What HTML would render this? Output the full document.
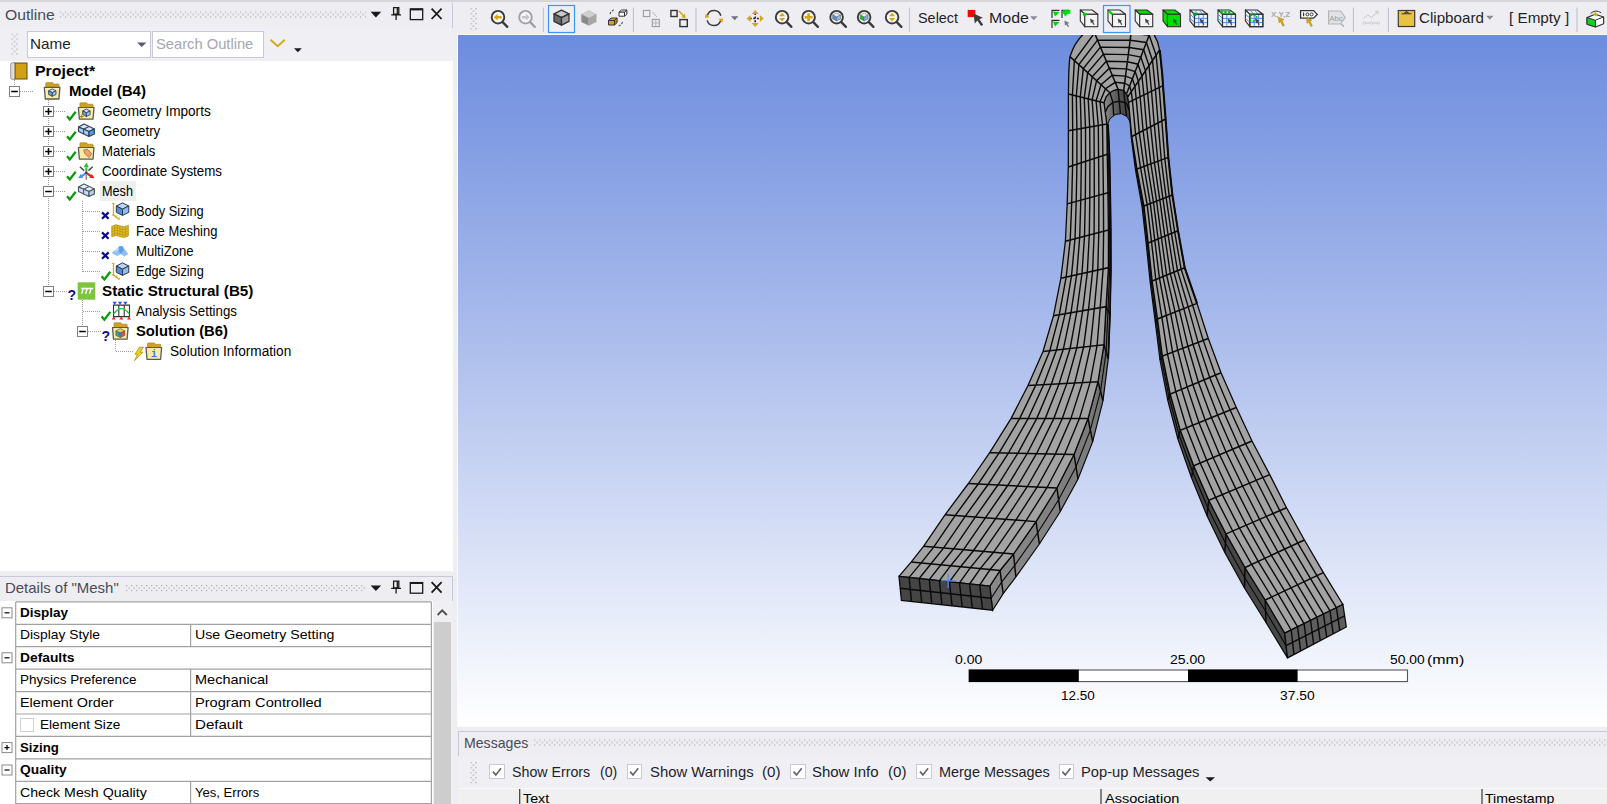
<!DOCTYPE html>
<html><head><meta charset="utf-8"><title>Mechanical</title><style>
html,body{margin:0;padding:0}
body{width:1607px;height:804px;overflow:hidden;background:#eeeef2;position:relative;font-family:"Liberation Sans",sans-serif;}
.b{position:absolute;box-sizing:border-box}
.t{position:absolute;white-space:nowrap;line-height:1;transform-origin:0 0;display:block}
svg.ov{position:absolute;left:0;top:0;width:1607px;height:804px;overflow:hidden}
</style></head>
<body>
<div class="b" style="left:0.0px;top:0.0px;width:1607.0px;height:2.0px;background:#d6d6da"></div>
<div class="b" style="left:452.0px;top:3.0px;width:1.0px;height:25.0px;background:#c8c8dc"></div>
<div class="b" style="left:0.0px;top:27.0px;width:452.0px;height:34.0px;background:#f0f0f4"></div>
<div class="b" style="left:27.0px;top:30.5px;width:124.0px;height:27.0px;background:#fff;border:1px solid #c8c8dc"></div>
<div class="b" style="left:152.0px;top:30.5px;width:112.0px;height:27.0px;background:#fff;border:1px solid #c8c8dc"></div>
<div class="b" style="left:0.0px;top:61.0px;width:452.5px;height:510.0px;background:#fff"></div>
<div class="b" style="left:100.2px;top:180.8px;width:36.2px;height:19.8px;background:#efefef"></div>
<div class="b" style="left:0.0px;top:576.0px;width:453.0px;height:1.0px;background:#c8c8dc"></div>
<div class="b" style="left:452.0px;top:576.0px;width:1.0px;height:25.0px;background:#c8c8dc"></div>
<div class="b" style="left:0.0px;top:601.0px;width:433.0px;height:203.0px;background:#fff"></div>
<div class="b" style="left:433.0px;top:601.0px;width:18.5px;height:203.0px;background:#f0f0f2"></div>
<div class="b" style="left:433.5px;top:622.0px;width:17.5px;height:182.0px;background:#cdcdcd"></div>
<div class="b" style="left:457.0px;top:34.0px;width:1150.0px;height:693.0px;background:#fbfbfb"></div>
<div class="b" style="left:458.0px;top:35.0px;width:1149.0px;height:691.0px;background:linear-gradient(to bottom,#6c8cde 0%,#a9bbec 42%,#ffffff 100%)"></div>
<div class="b" style="left:458.0px;top:731.0px;width:1149.0px;height:1.0px;background:#c8c8dc"></div>
<div class="b" style="left:458.0px;top:731.0px;width:1.0px;height:25.0px;background:#c8c8dc"></div>
<div class="b" style="left:458.0px;top:757.0px;width:1149.0px;height:30.0px;background:#f0f0f4"></div>
<div class="b" style="left:458.0px;top:788.0px;width:1149.0px;height:16.0px;background:#f0f0f0;border-top:1px solid #fafafa"></div>
<div class="b" style="left:489.3px;top:763.6px;width:15.6px;height:15.8px;background:#fff;border:1px solid #c8c8dc"></div>
<div class="b" style="left:626.5px;top:763.6px;width:15.6px;height:15.8px;background:#fff;border:1px solid #c8c8dc"></div>
<div class="b" style="left:790.0px;top:763.6px;width:15.6px;height:15.8px;background:#fff;border:1px solid #c8c8dc"></div>
<div class="b" style="left:916.4px;top:763.6px;width:15.6px;height:15.8px;background:#fff;border:1px solid #c8c8dc"></div>
<div class="b" style="left:1058.8px;top:763.6px;width:15.6px;height:15.8px;background:#fff;border:1px solid #c8c8dc"></div>
<div class="b" style="left:20.3px;top:717.8px;width:14.0px;height:14.2px;background:#fff;border:1px solid #d0d0d0"></div>
<svg class="ov" viewBox="0 0 1607 804"><defs><clipPath id="vp"><rect x="458" y="35" width="1149" height="691"/></clipPath></defs><g clip-path="url(#vp)"><defs><linearGradient id="lg" gradientUnits="userSpaceOnUse" x1="0" y1="280" x2="0" y2="580"><stop offset="0" stop-color="#606060"/><stop offset="0.5" stop-color="#7a7a7a"/><stop offset="1" stop-color="#888888"/></linearGradient></defs>
<polygon points="1104.0,102.8 1106.8,124.0 1107.2,154.2 1107.9,192.7 1108.4,230.0 1108.4,267.7 1106.0,306.7 1103.9,344.8 1098.0,381.7 1088.0,418.6 1074.0,454.5 1056.9,488.0 1036.0,521.6 1013.5,554.0 1000.0,570.5 989.8,586.2 992.6,610.2 1003.2,593.7 1015.9,576.8 1039.4,544.0 1060.3,511.5 1078.0,479.0 1092.7,441.6 1103.0,400.7 1108.3,358.8 1110.0,314.7 1110.9,270.7 1110.8,231.5 1110.3,193.3 1109.5,154.6 1108.1,124.6 1107.3,124.8" fill="url(#lg)" stroke="#0a0a0a" stroke-width="1.2"/>
<polygon points="1128.6,102.4 1131.8,136.5 1137.0,169.0 1144.0,206.0 1148.2,243.0 1152.2,281.0 1157.5,319.0 1162.4,356.0 1170.2,394.0 1180.3,430.3 1193.7,465.7 1208.8,500.3 1226.0,533.9 1245.0,567.5 1265.2,600.0 1284.7,633.2 1287.5,657.9 1266.0,622.5 1244.5,588.0 1224.8,552.4 1207.0,515.8 1191.5,477.7 1177.8,438.8 1167.7,400.0 1160.0,360.0 1155.2,321.8 1150.2,282.4 1146.2,243.6 1142.0,206.5 1135.4,169.5 1131.2,136.9 1130.1,121.8" fill="#474747" stroke="#0a0a0a" stroke-width="1.2"/>
<defs><linearGradient id="ig" x1="0" x2="1" y1="0" y2="0"><stop offset="0" stop-color="#8c8c8c"/><stop offset="0.3" stop-color="#6a6a6a"/><stop offset="0.55" stop-color="#525252"/><stop offset="1" stop-color="#3c3c3c"/></linearGradient></defs>
<polygon points="1104.0,102.8 1106.0,97.0 1109.9,92.7 1114.0,90.3 1118.1,89.3 1123.7,90.4 1127.1,94.9 1128.6,102.4 1131.6,130.7 1130.1,121.8 1127.1,116.6 1121.1,113.6 1115.1,114.7 1109.9,118.8 1107.3,124.8 1107.7,132.0" fill="url(#ig)" stroke="#0a0a0a" stroke-width="1"/>
<path d="M 899.0,576.3 L 899.0,576.3 L 911.3,561.9 L 923.7,546.2 L 945.0,514.8 L 968.4,483.5 L 989.7,452.7 L 1011.0,418.6 L 1028.0,385.5 L 1043.0,351.5 L 1053.5,315.7 L 1060.9,278.2 L 1065.4,241.3 L 1067.2,203.9 L 1068.3,167.0 L 1068.4,130.7 L 1068.4,94.0 L 1068.7,75 Q 1069.2,62 1070,56.6 Q 1074.5,42.5 1083.5,34 L 1088,20 L 1148,20 L 1154,34.5 Q 1158.6,42 1159.6,50 L 1162.2,75.5 L 1163.0,85.7 L 1165.6,119.0 L 1168.3,157.4 L 1172.4,195.0 L 1178.0,230.7 L 1184.7,267.7 L 1197.0,303.4 L 1208.3,338.5 L 1221.0,372.8 L 1236.3,407.5 L 1252.0,441.0 L 1269.7,474.6 L 1286.5,507.7 L 1304.4,540.0 L 1323.4,572.6 L 1342.9,604.5 L 1284.7,633.2 L 1265.2,600.0 L 1245.0,567.5 L 1226.0,533.9 L 1208.8,500.3 L 1193.7,465.7 L 1180.3,430.3 L 1170.2,394.0 L 1162.4,356.0 L 1157.5,319.0 L 1152.2,281.0 L 1148.2,243.0 L 1144.0,206.0 L 1137.0,169.0 L 1131.8,136.5 L 1128.6,102.4 L 1127.1,94.9 L 1123.7,90.4 L 1118.1,89.3 L 1114.0,90.3 L 1109.9,92.7 L 1106.0,97.0 L 1104.0,102.8 L 1106.8,124.0 L 1107.2,154.2 L 1107.9,192.7 L 1108.4,230.0 L 1108.4,267.7 L 1106.0,306.7 L 1103.9,344.8 L 1098.0,381.7 L 1088.0,418.6 L 1074.0,454.5 L 1056.9,488.0 L 1036.0,521.6 L 1013.5,554.0 L 1000.0,570.5 L 989.8,586.2 Z" fill="#a3a3a3" stroke="#0a0a0a" stroke-width="1.3" stroke-linejoin="round"/>
<polyline points="1159.8,50.0 1162.4,75.5 1163.0,85.7 1165.6,119.0 1168.3,157.4 1172.4,195.0 1178.0,230.7 1184.7,267.7 1197.0,303.4" fill="none" stroke="#0a0a0a" stroke-width="2"/>
<polyline points="1108.1,124.6 1109.5,154.6 1110.3,193.3 1110.8,231.5 1110.9,270.7 1110.0,314.7 1108.3,358.8" fill="none" stroke="#0a0a0a" stroke-width="1.6"/>
<polyline points="1072.4,95.0 1072.7,130.0 1072.6,165.6 1071.7,202.7 1070.2,240.0 1066.2,277.0 1059.3,314.7 1049.8,350.8 1035.8,385.1 1019.6,418.6 999.1,452.9 978.2,484.0 955.1,515.6 933.7,547.1 921.2,562.9 909.1,577.4" fill="none" stroke="#0a0a0a" stroke-width="1.4"/>
<polyline points="1076.3,96.0 1076.9,129.2 1076.9,164.2 1076.2,201.4 1075.0,238.8 1071.5,275.9 1065.2,313.7 1056.5,350.0 1043.6,384.7 1028.1,418.6 1008.4,453.1 988.1,484.5 965.2,516.3 943.7,547.9 931.0,563.8 919.2,578.5" fill="none" stroke="#0a0a0a" stroke-width="1.4"/>
<polyline points="1080.3,96.9 1081.2,128.5 1081.3,162.7 1080.8,200.2 1079.7,237.5 1076.7,274.7 1071.0,312.7 1063.3,349.3 1051.3,384.2 1036.7,418.6 1017.8,453.3 997.9,485.0 975.3,517.1 953.6,548.8 940.9,564.8 929.3,579.6" fill="none" stroke="#0a0a0a" stroke-width="1.4"/>
<polyline points="1084.2,97.9 1085.5,127.7 1085.6,161.3 1085.3,198.9 1084.5,236.3 1082.0,273.5 1076.8,311.7 1070.1,348.5 1059.1,383.8 1045.2,418.6 1027.2,453.5 1007.7,485.5 985.4,517.8 963.6,549.7 950.7,565.7 939.4,580.7" fill="none" stroke="#0a0a0a" stroke-width="1.4"/>
<polyline points="1088.2,98.9 1089.7,127.0 1089.9,159.9 1089.8,197.7 1089.3,235.0 1087.3,272.4 1082.7,310.7 1076.8,347.8 1066.9,383.4 1053.8,418.6 1036.5,453.7 1017.6,486.0 995.6,518.6 973.6,550.5 960.6,566.7 949.4,581.8" fill="none" stroke="#0a0a0a" stroke-width="1.4"/>
<polyline points="1092.1,99.9 1094.0,126.2 1094.2,158.5 1094.3,196.4 1094.1,233.8 1092.6,271.2 1088.5,309.7 1083.6,347.0 1074.7,383.0 1062.3,418.6 1045.9,453.9 1027.4,486.5 1005.7,519.3 983.6,551.4 970.4,567.6 959.5,582.9" fill="none" stroke="#0a0a0a" stroke-width="1.4"/>
<polyline points="1096.1,100.8 1098.3,125.5 1098.6,157.0 1098.9,195.2 1098.8,232.5 1097.8,270.0 1094.3,308.7 1090.4,346.3 1082.4,382.5 1070.9,418.6 1055.3,454.1 1037.2,487.0 1015.8,520.1 993.5,552.3 980.3,568.6 969.6,584.0" fill="none" stroke="#0a0a0a" stroke-width="1.4"/>
<polyline points="1100.0,101.8 1102.5,124.7 1102.9,155.6 1103.4,193.9 1103.6,231.3 1103.1,268.9 1100.2,307.7 1097.1,345.5 1090.2,382.1 1079.4,418.6 1064.6,454.3 1047.1,487.5 1025.9,520.8 1003.5,553.1 990.1,569.5 979.7,585.1" fill="none" stroke="#0a0a0a" stroke-width="1.4"/>
<polyline points="1068.4,130.7 1106.8,124.0 1108.1,124.6" fill="none" stroke="#0a0a0a" stroke-width="1.5"/>
<polyline points="1068.3,167.0 1107.2,154.2 1109.5,154.6" fill="none" stroke="#0a0a0a" stroke-width="1.5"/>
<polyline points="1067.2,203.9 1107.9,192.7 1110.3,193.3" fill="none" stroke="#0a0a0a" stroke-width="1.5"/>
<polyline points="1065.4,241.3 1108.4,230.0 1110.8,231.5" fill="none" stroke="#0a0a0a" stroke-width="1.5"/>
<polyline points="1060.9,278.2 1108.4,267.7 1110.9,270.7" fill="none" stroke="#0a0a0a" stroke-width="1.5"/>
<polyline points="1053.5,315.7 1106.0,306.7 1110.0,314.7" fill="none" stroke="#0a0a0a" stroke-width="1.5"/>
<polyline points="1043.0,351.5 1103.9,344.8 1108.3,358.8" fill="none" stroke="#0a0a0a" stroke-width="1.5"/>
<polyline points="1028.0,385.5 1098.0,381.7 1103.0,400.7" fill="none" stroke="#0a0a0a" stroke-width="1.5"/>
<polyline points="1011.0,418.6 1088.0,418.6 1092.7,441.6" fill="none" stroke="#0a0a0a" stroke-width="1.5"/>
<polyline points="989.7,452.7 1074.0,454.5 1078.0,479.0" fill="none" stroke="#0a0a0a" stroke-width="1.5"/>
<polyline points="968.4,483.5 1056.9,488.0 1060.3,511.5" fill="none" stroke="#0a0a0a" stroke-width="1.5"/>
<polyline points="945.0,514.8 1036.0,521.6 1039.4,544.0" fill="none" stroke="#0a0a0a" stroke-width="1.5"/>
<polyline points="923.7,546.2 1013.5,554.0 1015.9,576.8" fill="none" stroke="#0a0a0a" stroke-width="1.5"/>
<polyline points="911.3,561.9 1000.0,570.5 1003.2,593.7" fill="none" stroke="#0a0a0a" stroke-width="1.5"/>
<polyline points="1107.4,124.3 1108.3,154.4 1109.1,193.0 1109.6,230.8 1109.7,269.2 1108.0,310.7 1106.1,351.8 1100.5,391.2 1090.3,430.1 1076.0,466.8 1058.6,499.8 1037.7,532.8 1014.7,565.4 1001.6,582.1 991.2,598.2" fill="none" stroke="#0a0a0a" stroke-width="1.1"/>
<polyline points="1159.2,87.6 1161.8,120.9 1164.8,158.7 1169.2,196.2 1174.7,232.1 1181.1,269.2 1192.6,305.1 1203.2,340.4 1215.4,375.2 1230.1,410.0 1245.5,443.7 1262.9,477.5 1279.8,510.6 1297.8,543.1 1316.9,575.6 1336.4,607.7" fill="none" stroke="#0a0a0a" stroke-width="1.4"/>
<polyline points="1155.4,89.4 1158.1,122.9 1161.3,160.0 1166.1,197.4 1171.4,233.4 1177.5,270.7 1188.2,306.9 1198.1,342.4 1209.7,377.5 1223.9,412.6 1239.0,446.5 1256.2,480.3 1273.1,513.5 1291.2,546.1 1310.5,578.7 1330.0,610.9" fill="none" stroke="#0a0a0a" stroke-width="1.4"/>
<polyline points="1151.5,91.3 1154.3,124.8 1157.9,161.3 1162.9,198.7 1168.1,234.8 1173.9,272.1 1183.8,308.6 1193.0,344.3 1204.1,379.9 1217.6,415.1 1232.6,449.2 1249.4,483.2 1266.3,516.4 1284.6,549.2 1304.0,581.7 1323.5,614.1" fill="none" stroke="#0a0a0a" stroke-width="1.4"/>
<polyline points="1147.7,93.1 1150.6,126.8 1154.4,162.6 1159.8,199.9 1164.8,236.2 1170.3,273.6 1179.4,310.3 1187.9,346.3 1198.4,382.2 1211.4,417.6 1226.1,452.0 1242.6,486.0 1259.6,519.3 1278.0,552.2 1297.5,584.8 1317.0,617.3" fill="none" stroke="#0a0a0a" stroke-width="1.4"/>
<polyline points="1143.9,95.0 1146.8,128.7 1150.9,163.8 1156.6,201.1 1161.4,237.5 1166.6,275.1 1175.1,312.1 1182.8,348.2 1192.8,384.6 1205.2,420.2 1219.6,454.7 1235.9,488.9 1252.9,522.3 1271.4,555.3 1291.1,587.8 1310.6,620.4" fill="none" stroke="#0a0a0a" stroke-width="1.4"/>
<polyline points="1140.1,96.8 1143.1,130.7 1147.4,165.1 1153.5,202.3 1158.1,238.9 1163.0,276.6 1170.7,313.8 1177.7,350.2 1187.1,386.9 1199.0,422.7 1213.1,457.5 1229.1,491.7 1246.2,525.2 1264.8,558.3 1284.6,590.9 1304.1,623.6" fill="none" stroke="#0a0a0a" stroke-width="1.4"/>
<polyline points="1136.2,98.7 1139.3,132.6 1144.0,166.4 1150.3,203.6 1154.8,240.3 1159.4,278.0 1166.3,315.5 1172.6,352.1 1181.5,389.3 1192.7,425.2 1206.7,460.2 1222.3,494.6 1239.4,528.1 1258.2,561.4 1278.1,593.9 1297.6,626.8" fill="none" stroke="#0a0a0a" stroke-width="1.4"/>
<polyline points="1132.4,100.5 1135.6,134.6 1140.5,167.7 1147.2,204.8 1151.5,241.6 1155.8,279.5 1161.9,317.3 1167.5,354.1 1175.8,391.6 1186.5,427.8 1200.2,463.0 1215.6,497.4 1232.7,531.0 1251.6,564.4 1271.7,597.0 1291.2,630.0" fill="none" stroke="#0a0a0a" stroke-width="1.4"/>
<polyline points="1165.6,119.0 1131.8,136.5 1131.2,136.9" fill="none" stroke="#0a0a0a" stroke-width="1.5"/>
<polyline points="1168.3,157.4 1137.0,169.0 1135.4,169.5" fill="none" stroke="#0a0a0a" stroke-width="1.5"/>
<polyline points="1172.4,195.0 1144.0,206.0 1142.0,206.5" fill="none" stroke="#0a0a0a" stroke-width="1.5"/>
<polyline points="1178.0,230.7 1148.2,243.0 1146.2,243.6" fill="none" stroke="#0a0a0a" stroke-width="1.5"/>
<polyline points="1184.7,267.7 1152.2,281.0 1150.2,282.4" fill="none" stroke="#0a0a0a" stroke-width="1.5"/>
<polyline points="1197.0,303.4 1157.5,319.0 1155.2,321.8" fill="none" stroke="#0a0a0a" stroke-width="1.5"/>
<polyline points="1208.3,338.5 1162.4,356.0 1160.0,360.0" fill="none" stroke="#0a0a0a" stroke-width="1.5"/>
<polyline points="1221.0,372.8 1170.2,394.0 1167.7,400.0" fill="none" stroke="#0a0a0a" stroke-width="1.5"/>
<polyline points="1236.3,407.5 1180.3,430.3 1177.8,438.8" fill="none" stroke="#0a0a0a" stroke-width="1.5"/>
<polyline points="1252.0,441.0 1193.7,465.7 1191.5,477.7" fill="none" stroke="#0a0a0a" stroke-width="1.5"/>
<polyline points="1269.7,474.6 1208.8,500.3 1207.0,515.8" fill="none" stroke="#0a0a0a" stroke-width="1.5"/>
<polyline points="1286.5,507.7 1226.0,533.9 1224.8,552.4" fill="none" stroke="#0a0a0a" stroke-width="1.5"/>
<polyline points="1304.4,540.0 1245.0,567.5 1244.5,588.0" fill="none" stroke="#0a0a0a" stroke-width="1.5"/>
<polyline points="1323.4,572.6 1265.2,600.0 1266.0,622.5" fill="none" stroke="#0a0a0a" stroke-width="1.5"/>
<polyline points="1131.5,136.7 1136.2,169.2 1143.0,206.2 1147.2,243.3 1151.2,281.7 1156.3,320.4 1161.2,358.0 1169.0,397.0 1179.0,434.6 1192.6,471.7 1207.9,508.0 1225.4,543.1 1244.8,577.8 1265.6,611.2 1286.1,645.6" fill="none" stroke="#0a0a0a" stroke-width="1.1"/>
<polyline points="1068.4,94.0 1104.0,102.8" fill="none" stroke="#0a0a0a" stroke-width="1.5"/>
<polyline points="1070.0,56.6 1109.9,92.7" fill="none" stroke="#0a0a0a" stroke-width="1.5"/>
<polyline points="1091.6,26.0 1118.1,89.3" fill="none" stroke="#0a0a0a" stroke-width="1.5"/>
<polyline points="1132.0,26.0 1123.7,90.4" fill="none" stroke="#0a0a0a" stroke-width="1.5"/>
<polyline points="1152.0,28.0 1126.8,93.2" fill="none" stroke="#0a0a0a" stroke-width="1.5"/>
<polyline points="1159.6,50.0 1127.8,96.8" fill="none" stroke="#0a0a0a" stroke-width="1.5"/>
<polyline points="1163.0,85.7 1128.6,102.4" fill="none" stroke="#0a0a0a" stroke-width="1.5"/>
<polyline points="1072.4,95.0 1074.4,60.6 1094.5,33.0 1131.1,33.2 1149.2,35.2 1156.1,55.2 1159.2,87.6" fill="none" stroke="#0a0a0a" stroke-width="1.4"/>
<polyline points="1076.3,96.0 1078.9,64.6 1097.5,40.1 1130.2,40.3 1146.4,42.5 1152.5,60.4 1155.4,89.4" fill="none" stroke="#0a0a0a" stroke-width="1.4"/>
<polyline points="1080.3,96.9 1083.3,68.6 1100.4,47.1 1129.2,47.5 1143.6,49.7 1149.0,65.6 1151.5,91.3" fill="none" stroke="#0a0a0a" stroke-width="1.4"/>
<polyline points="1084.2,97.9 1087.7,72.6 1103.4,54.1 1128.3,54.6 1140.8,57.0 1145.5,70.8 1147.7,93.1" fill="none" stroke="#0a0a0a" stroke-width="1.4"/>
<polyline points="1088.2,98.9 1092.2,76.7 1106.3,61.2 1127.4,61.8 1138.0,64.2 1141.9,76.0 1143.9,95.0" fill="none" stroke="#0a0a0a" stroke-width="1.4"/>
<polyline points="1092.1,99.9 1096.6,80.7 1109.3,68.2 1126.5,68.9 1135.2,71.5 1138.4,81.2 1140.1,96.8" fill="none" stroke="#0a0a0a" stroke-width="1.4"/>
<polyline points="1096.1,100.8 1101.0,84.7 1112.2,75.2 1125.5,76.1 1132.4,78.7 1134.9,86.4 1136.2,98.7" fill="none" stroke="#0a0a0a" stroke-width="1.4"/>
<polyline points="1100.0,101.8 1105.5,88.7 1115.2,82.3 1124.6,83.2 1129.6,86.0 1131.3,91.6 1132.4,100.5" fill="none" stroke="#0a0a0a" stroke-width="1.4"/>
<polyline points="1105.4,112.0 1108.0,106.5 1112.9,102.4 1119.6,101.3 1126.3,103.0 1129.2,110.0" fill="none" stroke="#0a0a0a" stroke-width="1.4"/>
<polyline points="1109.9,92.7 1112.9,102.4 1113.7,115.5" fill="none" stroke="#0a0a0a" stroke-width="1.4"/>
<polyline points="1118.1,89.3 1119.3,101.3 1120.4,113.7" fill="none" stroke="#0a0a0a" stroke-width="1.4"/>
<polyline points="1123.7,90.4 1124.9,102.5 1126.4,116.0" fill="none" stroke="#0a0a0a" stroke-width="1.4"/>
<polygon points="899.0,576.3 989.8,586.2 992.6,610.2 901.4,600.3" fill="#454545" stroke="#0a0a0a" stroke-width="1.3"/>
<polyline points="909.1,577.4 911.5,601.4" fill="none" stroke="#0a0a0a" stroke-width="1.4"/>
<polyline points="919.2,578.5 921.7,602.5" fill="none" stroke="#0a0a0a" stroke-width="1.4"/>
<polyline points="929.3,579.6 931.8,603.6" fill="none" stroke="#0a0a0a" stroke-width="1.4"/>
<polyline points="939.4,580.7 941.9,604.7" fill="none" stroke="#0a0a0a" stroke-width="1.4"/>
<polyline points="949.4,581.8 952.1,605.8" fill="none" stroke="#0a0a0a" stroke-width="1.4"/>
<polyline points="959.5,582.9 962.2,606.9" fill="none" stroke="#0a0a0a" stroke-width="1.4"/>
<polyline points="969.6,584.0 972.3,608.0" fill="none" stroke="#0a0a0a" stroke-width="1.4"/>
<polyline points="979.7,585.1 982.5,609.1" fill="none" stroke="#0a0a0a" stroke-width="1.4"/>
<polyline points="900.2,588.3 991.2,598.2" fill="none" stroke="#0a0a0a" stroke-width="1.4"/>
<polygon points="1284.7,633.2 1342.9,604.5 1346.3,627.0 1287.5,657.9" fill="#5e5e5e" stroke="#0a0a0a" stroke-width="1.3"/>
<polyline points="1291.2,630.0 1294.0,654.5" fill="none" stroke="#0a0a0a" stroke-width="1.4"/>
<polyline points="1297.6,626.8 1300.6,651.0" fill="none" stroke="#0a0a0a" stroke-width="1.4"/>
<polyline points="1304.1,623.6 1307.1,647.6" fill="none" stroke="#0a0a0a" stroke-width="1.4"/>
<polyline points="1310.6,620.4 1313.6,644.2" fill="none" stroke="#0a0a0a" stroke-width="1.4"/>
<polyline points="1317.0,617.3 1320.2,640.7" fill="none" stroke="#0a0a0a" stroke-width="1.4"/>
<polyline points="1323.5,614.1 1326.7,637.3" fill="none" stroke="#0a0a0a" stroke-width="1.4"/>
<polyline points="1330.0,610.9 1333.2,633.9" fill="none" stroke="#0a0a0a" stroke-width="1.4"/>
<polyline points="1336.4,607.7 1339.8,630.4" fill="none" stroke="#0a0a0a" stroke-width="1.4"/>
<polyline points="1286.1,645.6 1344.6,615.8" fill="none" stroke="#0a0a0a" stroke-width="1.4"/>
<path d="M941,580.8 H955.5 M948.2,573.5 V588" stroke="#5b86e0" stroke-width="1.2" fill="none"/></g><defs><pattern id="d60_11" x="60.0" y="11.4" width="5" height="5" patternUnits="userSpaceOnUse"><rect x="0" y="0" width="1.3" height="1.3" fill="#b0b0b8"/><rect x="2.5" y="2.5" width="1.3" height="1.3" fill="#b0b0b8"/></pattern></defs><rect x="60.0" y="11.4" width="306.0" height="6.6" fill="url(#d60_11)"/><polygon points="370.6,11.8 381.2,11.8 375.9,17.5" fill="#1a1a1a"/><path d="M393.6,7.6 h5.2 v6.6 h-5.2 z M397.3,7.6 v6.6 M391.2,14.8 h9.8 M396.1,14.8 v5.2" fill="none" stroke="#1a1a1a" stroke-width="1.3"/><rect x="410.3" y="9.0" width="12.4" height="10.6" fill="none" stroke="#1a1a1a" stroke-width="1.3"/><path d="M410.3,9.4 h12.4" stroke="#1a1a1a" stroke-width="2"/><path d="M431.6,8.6 l10,10.4 M441.6,8.6 l-10,10.4" stroke="#1a1a1a" stroke-width="1.8"/><defs><pattern id="d126_585" x="126.0" y="585.0" width="5" height="5" patternUnits="userSpaceOnUse"><rect x="0" y="0" width="1.3" height="1.3" fill="#b0b0b8"/><rect x="2.5" y="2.5" width="1.3" height="1.3" fill="#b0b0b8"/></pattern></defs><rect x="126.0" y="585.0" width="240.0" height="6.6" fill="url(#d126_585)"/><polygon points="370.6,585.4 381.2,585.4 375.9,591.1" fill="#1a1a1a"/><path d="M393.6,581.2 h5.2 v6.6 h-5.2 z M397.3,581.2 v6.6 M391.2,588.4 h9.8 M396.1,588.4 v5.2" fill="none" stroke="#1a1a1a" stroke-width="1.3"/><rect x="410.3" y="582.6" width="12.4" height="10.6" fill="none" stroke="#1a1a1a" stroke-width="1.3"/><path d="M410.3,583.0 h12.4" stroke="#1a1a1a" stroke-width="2"/><path d="M431.6,582.2 l10,10.4 M441.6,582.2 l-10,10.4" stroke="#1a1a1a" stroke-width="1.8"/><defs><pattern id="d534_739" x="534.0" y="739.4" width="5" height="5" patternUnits="userSpaceOnUse"><rect x="0" y="0" width="1.3" height="1.3" fill="#b0b0b8"/><rect x="2.5" y="2.5" width="1.3" height="1.3" fill="#b0b0b8"/></pattern></defs><rect x="534.0" y="739.4" width="1073.0" height="6.6" fill="url(#d534_739)"/><defs><pattern id="d11_33" x="11.4" y="33.4" width="5" height="5" patternUnits="userSpaceOnUse"><rect x="0" y="0" width="1.3" height="1.3" fill="#a4a4ac"/><rect x="2.5" y="2.5" width="1.3" height="1.3" fill="#a4a4ac"/></pattern></defs><rect x="11.4" y="33.4" width="6.6" height="21.6" fill="url(#d11_33)"/><defs><pattern id="d470_8" x="470.4" y="8.0" width="5" height="5" patternUnits="userSpaceOnUse"><rect x="0" y="0" width="1.3" height="1.3" fill="#a4a4ac"/><rect x="2.5" y="2.5" width="1.3" height="1.3" fill="#a4a4ac"/></pattern></defs><rect x="470.4" y="8.0" width="6.6" height="22.4" fill="url(#d470_8)"/><defs><pattern id="d470_762" x="470.4" y="762.0" width="5" height="5" patternUnits="userSpaceOnUse"><rect x="0" y="0" width="1.3" height="1.3" fill="#a4a4ac"/><rect x="2.5" y="2.5" width="1.3" height="1.3" fill="#a4a4ac"/></pattern></defs><rect x="470.4" y="762.0" width="6.6" height="22.0" fill="url(#d470_762)"/><polygon points="137,42.4 146.4,42.4 141.7,47" fill="#5a5a66"/><path d="M270.6,39.8 l7.1,6.4 l7.1,-6.4" fill="none" stroke="#d4a81c" stroke-width="1.9"/><polygon points="294,48.2 301.8,48.2 297.9,52.2" fill="#1a1a1a"/><path d="M14.5,80 V86 M20,91.5 H33 M48.5,100 V286 M54,111.5 H66 M54,131.5 H66 M54,151.5 H66 M54,171.5 H66 M54,191.5 H66 M54,291.5 H67 M82.5,201 V271.5 M82.5,211.5 H100 M82.5,231.5 H100 M82.5,251.5 H100 M82.5,271.5 H100 M82.5,300 V326 M82.5,311.5 H100 M88,331.5 H101 M115.5,340 V351.5 H134" stroke="#9a9a9a" stroke-width="1" stroke-dasharray="1 1" shape-rendering="crispEdges" fill="none"/><rect x="9.5" y="86.5" width="10" height="10" fill="#fff" stroke="#808080" stroke-width="1"/><path d="M11.2,91.5 h6.6" stroke="#000" stroke-width="1.5"/><rect x="43.5" y="106.5" width="10" height="10" fill="#fff" stroke="#808080" stroke-width="1"/><path d="M45.2,111.5 h6.6" stroke="#000" stroke-width="1.5"/><path d="M48.5,108.2 v6.6" stroke="#000" stroke-width="1.5"/><rect x="43.5" y="126.5" width="10" height="10" fill="#fff" stroke="#808080" stroke-width="1"/><path d="M45.2,131.5 h6.6" stroke="#000" stroke-width="1.5"/><path d="M48.5,128.2 v6.6" stroke="#000" stroke-width="1.5"/><rect x="43.5" y="146.5" width="10" height="10" fill="#fff" stroke="#808080" stroke-width="1"/><path d="M45.2,151.5 h6.6" stroke="#000" stroke-width="1.5"/><path d="M48.5,148.2 v6.6" stroke="#000" stroke-width="1.5"/><rect x="43.5" y="166.5" width="10" height="10" fill="#fff" stroke="#808080" stroke-width="1"/><path d="M45.2,171.5 h6.6" stroke="#000" stroke-width="1.5"/><path d="M48.5,168.2 v6.6" stroke="#000" stroke-width="1.5"/><rect x="43.5" y="186.5" width="10" height="10" fill="#fff" stroke="#808080" stroke-width="1"/><path d="M45.2,191.5 h6.6" stroke="#000" stroke-width="1.5"/><rect x="43.5" y="286.5" width="10" height="10" fill="#fff" stroke="#808080" stroke-width="1"/><path d="M45.2,291.5 h6.6" stroke="#000" stroke-width="1.5"/><rect x="77.5" y="326.5" width="10" height="10" fill="#fff" stroke="#808080" stroke-width="1"/><path d="M79.2,331.5 h6.6" stroke="#000" stroke-width="1.5"/><path d="M67.0,116.2 l2.8,3.3 l5.9,-7.8" fill="none" stroke="#0a9a0a" stroke-width="2.3" stroke-linejoin="miter"/><path d="M67.0,136.2 l2.8,3.3 l5.9,-7.8" fill="none" stroke="#0a9a0a" stroke-width="2.3" stroke-linejoin="miter"/><path d="M67.0,156.2 l2.8,3.3 l5.9,-7.8" fill="none" stroke="#0a9a0a" stroke-width="2.3" stroke-linejoin="miter"/><path d="M67.0,176.2 l2.8,3.3 l5.9,-7.8" fill="none" stroke="#0a9a0a" stroke-width="2.3" stroke-linejoin="miter"/><path d="M67.0,196.2 l2.8,3.3 l5.9,-7.8" fill="none" stroke="#0a9a0a" stroke-width="2.3" stroke-linejoin="miter"/><path d="M102.0,212.4 l6.6,6.4 M108.6,212.4 l-6.6,6.4" fill="none" stroke="#0a0a8c" stroke-width="2.2"/><path d="M102.0,232.4 l6.6,6.4 M108.6,232.4 l-6.6,6.4" fill="none" stroke="#0a0a8c" stroke-width="2.2"/><path d="M102.0,252.4 l6.6,6.4 M108.6,252.4 l-6.6,6.4" fill="none" stroke="#0a0a8c" stroke-width="2.2"/><path d="M101.6,276.2 l2.8,3.3 l5.9,-7.8" fill="none" stroke="#0a9a0a" stroke-width="2.3" stroke-linejoin="miter"/><path d="M101.6,316.4 l2.8,3.3 l5.9,-7.8" fill="none" stroke="#0a9a0a" stroke-width="2.3" stroke-linejoin="miter"/><text x="67.6" y="300.2" font-family="Liberation Sans, sans-serif" font-weight="700" font-size="14" fill="#0a0a8c">?</text><text x="101.4" y="340.6" font-family="Liberation Sans, sans-serif" font-weight="700" font-size="14" fill="#0a0a8c">?</text><polygon points="139.5,347.2 143.5,347.2 140.0,352.2 143.0,352.2 134.5,360.7 137.5,354.2 135.0,354.2" fill="#f2cf1d" stroke="#8a7a10" stroke-width="0.6"/><rect x="10.8" y="62.8" width="5" height="16.4" rx="1.5" fill="#f4f4f4" stroke="#777" stroke-width="0.9"/><path d="M12.8,64.4 v13" stroke="#bbb" stroke-width="1.6" stroke-dasharray="1 1"/><rect x="15.0" y="63.0" width="12" height="16" fill="#d4a013" stroke="#5a4a18" stroke-width="1"/><path d="M45.8,87.4 v-4 q0,-0.8 0.8,-0.8 h6 l1,1.4 h4.6 q0.8,0 0.8,0.8 v2.6 z" fill="#d2a022" stroke="#9a7a20" stroke-width="0.6"/><path d="M44.3,87.4 h15.6 l-1,11.6 h-13.6 z" fill="#f7eca4" stroke="#5a5a5a" stroke-width="1.3" stroke-linejoin="round"/><path d="M45.3,88.6 h13.6" stroke="#fbf6cf" stroke-width="1"/><polygon points="52.3,88.9 56.0,90.8 52.3,92.6 48.6,90.8" fill="#cfe2f8" stroke="#2a3a50" stroke-width="0.8" stroke-linejoin="round"/><polygon points="48.6,90.8 52.3,92.6 52.3,96.3 48.6,94.5" fill="#6f9fdc" stroke="#2a3a50" stroke-width="0.8" stroke-linejoin="round"/><polygon points="52.3,92.6 56.0,90.8 56.0,94.5 52.3,96.3" fill="#9cc2ee" stroke="#2a3a50" stroke-width="0.8" stroke-linejoin="round"/><path d="M79.9,107.6 v-4 q0,-0.8 0.8,-0.8 h6 l1,1.4 h4.6 q0.8,0 0.8,0.8 v2.6 z" fill="#d2a022" stroke="#9a7a20" stroke-width="0.6"/><path d="M78.4,107.6 h15.6 l-1,11.6 h-13.6 z" fill="#f7eca4" stroke="#5a5a5a" stroke-width="1.3" stroke-linejoin="round"/><path d="M79.4,108.8 h13.6" stroke="#fbf6cf" stroke-width="1"/><polygon points="86.4,109.1 90.1,110.9 86.4,112.8 82.7,110.9" fill="#cfe2f8" stroke="#2a3a50" stroke-width="0.8" stroke-linejoin="round"/><polygon points="82.7,110.9 86.4,112.8 86.4,116.5 82.7,114.6" fill="#6f9fdc" stroke="#2a3a50" stroke-width="0.8" stroke-linejoin="round"/><polygon points="86.4,112.8 90.1,110.9 90.1,114.6 86.4,116.5" fill="#9cc2ee" stroke="#2a3a50" stroke-width="0.8" stroke-linejoin="round"/><path d="M79.7,116.6 h4 M81.7,114.6 v4" stroke="#b07a10" stroke-width="1"/><polygon points="78.5,127.0 84.0,124.0 94.4,129.0 89.0,131.5" fill="#d2e6fb" stroke="#364254" stroke-width="1.2" stroke-linejoin="round"/><polygon points="78.5,127.0 89.0,131.5 89.0,136.5 78.5,131.5" fill="#a4caf6" stroke="#364254" stroke-width="1.2" stroke-linejoin="round"/><polygon points="89.0,131.5 94.4,129.0 94.4,134.0 89.0,136.5" fill="#4f9bf0" stroke="#364254" stroke-width="1.2" stroke-linejoin="round"/><path d="M83.6,129.3 v5 M83.6,129.3 l5.4,-2.8" stroke="#364254" stroke-width="1.02" fill="none"/><path d="M79.9,147.6 v-4 q0,-0.8 0.8,-0.8 h6 l1,1.4 h4.6 q0.8,0 0.8,0.8 v2.6 z" fill="#d2a022" stroke="#9a7a20" stroke-width="0.6"/><path d="M78.4,147.6 h15.6 l-1,11.6 h-13.6 z" fill="#f7eca4" stroke="#5a5a5a" stroke-width="1.3" stroke-linejoin="round"/><path d="M79.4,148.8 h13.6" stroke="#fbf6cf" stroke-width="1"/><polygon points="83.7,150.1 87.2,149.1 91.7,153.6 89.2,157.6 84.7,153.6" fill="#f2a070" stroke="#a0703a" stroke-width="0.8"/><path d="M79.9,166.8 l4.2,3.8 M92.7,166.8 l-4.2,3.8" stroke="#4a4a4a" stroke-width="1.5"/><path d="M86.3,174.4 v5.4" stroke="#8a8a8a" stroke-width="1.5"/><path d="M86.3,171.4 V167.4" stroke="#14d014" stroke-width="2"/><polygon points="86.3,162.6 83.7,167.2 88.9,167.2" fill="#14d014"/><path d="M87.3,173.6 l4,2.8" stroke="#f01818" stroke-width="2"/><polygon points="94.5,178.2 89.3,177.8 91.9,174.0" fill="#f01818"/><path d="M85.3,173.6 l-4,2.8" stroke="#4a90f0" stroke-width="2"/><polygon points="78.1,178.2 83.3,177.8 80.7,174.0" fill="#4a90f0"/><rect x="85.1" y="171.6" width="2.4" height="2.4" fill="#333"/><polygon points="78.5,187.0 84.0,184.0 94.4,189.0 89.0,191.5" fill="#e6f0fb" stroke="#505860" stroke-width="1.2" stroke-linejoin="round"/><polygon points="78.5,187.0 89.0,191.5 89.0,196.5 78.5,191.5" fill="#c8dcf5" stroke="#505860" stroke-width="1.2" stroke-linejoin="round"/><polygon points="89.0,191.5 94.4,189.0 94.4,194.0 89.0,196.5" fill="#b2cef0" stroke="#505860" stroke-width="1.2" stroke-linejoin="round"/><path d="M83.6,189.3 v5 M83.6,189.3 l5.4,-2.8" stroke="#505860" stroke-width="1.02" fill="none"/><path d="M113.5,203.1 v12 l6,4.5" fill="none" stroke="#d9a520" stroke-width="1.3"/><path d="M111.8,203.4 h2.5 M111.8,214.9 h2.5 M115.7,217.2 l1.5,-2 M118.5,219.4 l1.5,-2" stroke="#d9a520" stroke-width="1"/><polygon points="122.5,202.9 128.8,206.0 122.5,209.2 116.3,206.0" fill="#b9d6f6" stroke="#30384a" stroke-width="1" stroke-linejoin="round"/><polygon points="116.3,206.0 122.5,209.2 122.5,215.4 116.3,212.3" fill="#4f8fdc" stroke="#30384a" stroke-width="1" stroke-linejoin="round"/><polygon points="122.5,209.2 128.8,206.0 128.8,212.3 122.5,215.4" fill="#8fbdf0" stroke="#30384a" stroke-width="1" stroke-linejoin="round"/><path d="M111.8,226.4 q4,-3 8,-0.5 q4,2.5 8.5,-0.5 v10.5 q-4.5,3 -8.5,0.5 q-4,-2.5 -8,0.5 z" fill="#e8c021" stroke="#a88a10" stroke-width="0.8"/><path d="M111.8,229.1 q4,-3 8,-0.5 q4,2.5 8.5,-0.5" fill="none" stroke="#a88a10" stroke-width="0.6"/><path d="M111.8,231.8 q4,-3 8,-0.5 q4,2.5 8.5,-0.5" fill="none" stroke="#a88a10" stroke-width="0.6"/><path d="M111.8,234.5 q4,-3 8,-0.5 q4,2.5 8.5,-0.5" fill="none" stroke="#a88a10" stroke-width="0.6"/><path d="M114.5,225.6 v10.5" stroke="#a88a10" stroke-width="0.6"/><path d="M117.3,225.6 v10.5" stroke="#a88a10" stroke-width="0.6"/><path d="M120.0,225.6 v10.5" stroke="#a88a10" stroke-width="0.6"/><path d="M122.8,225.6 v10.5" stroke="#a88a10" stroke-width="0.6"/><path d="M125.5,225.6 v10.5" stroke="#a88a10" stroke-width="0.6"/><polygon points="111.8,253.0 116.3,249.0 119.3,246.0 122.8,246.5 125.3,250.0 128.3,254.0 124.3,256.5 120.8,254.0 117.3,256.0 114.3,254.5" fill="#8fc0f4"/><polygon points="119.3,246.0 122.8,246.5 123.8,250.5 120.8,254.0 118.3,250.5" fill="#5f9fe8"/><polygon points="116.3,249.0 119.3,246.0 118.3,250.5 114.8,252.0" fill="#c4defa"/><path d="M113.5,263.1 v12 l6,4.5" fill="none" stroke="#d9a520" stroke-width="1.3"/><path d="M111.8,263.4 h2.5 M111.8,274.9 h2.5 M115.7,277.2 l1.5,-2 M118.5,279.4 l1.5,-2" stroke="#d9a520" stroke-width="1"/><polygon points="122.5,262.9 128.8,266.0 122.5,269.2 116.3,266.0" fill="#b9d6f6" stroke="#30384a" stroke-width="1" stroke-linejoin="round"/><polygon points="116.3,266.0 122.5,269.2 122.5,275.4 116.3,272.3" fill="#4f8fdc" stroke="#30384a" stroke-width="1" stroke-linejoin="round"/><polygon points="122.5,269.2 128.8,266.0 128.8,272.3 122.5,275.4" fill="#8fbdf0" stroke="#30384a" stroke-width="1" stroke-linejoin="round"/><rect x="77.7" y="282.3" width="17.6" height="17.4" fill="#7fc43f"/><path d="M81.1,288.5 h4.3 M83.3,288.5 l-1.6,5.2" stroke="#fff" stroke-width="1.3" fill="none"/><path d="M85.0,288.5 h4.3 M87.2,288.5 l-1.6,5.2" stroke="#fff" stroke-width="1.3" fill="none"/><path d="M88.9,288.5 h4.3 M91.1,288.5 l-1.6,5.2" stroke="#fff" stroke-width="1.3" fill="none"/><path d="M113.5,305.1 h16 v11.5 h-16 z M118.8,305.1 v11.5 M124.2,305.1 v11.5 " fill="none" stroke="#333" stroke-width="1.1"/><path d="M113.5,314.1 q8,-11 16,0" fill="none" stroke="#18c838" stroke-width="1.4"/><polygon points="112.6,301.8 116.8,301.8 114.7,305.0" fill="#2a50e0"/><polygon points="117.9,301.8 122.1,301.8 120.0,305.0" fill="#2a50e0"/><polygon points="123.3,301.8 127.5,301.8 125.4,305.0" fill="#2a50e0"/><polygon points="111.7,319.6 115.7,319.6 113.7,316.6" fill="#e82020"/><polygon points="119.3,319.6 123.3,319.6 121.3,316.6" fill="#e82020"/><polygon points="127.0,319.6 131.0,319.6 129.0,316.6" fill="#e82020"/><path d="M114.0,327.6 v-4 q0,-0.8 0.8,-0.8 h6 l1,1.4 h4.6 q0.8,0 0.8,0.8 v2.6 z" fill="#d2a022" stroke="#9a7a20" stroke-width="0.6"/><path d="M112.5,327.6 h15.6 l-1,11.6 h-13.6 z" fill="#f7eca4" stroke="#5a5a5a" stroke-width="1.3" stroke-linejoin="round"/><path d="M113.5,328.8 h13.6" stroke="#fbf6cf" stroke-width="1"/><polygon points="120.3,328.6 124.8,330.9 120.3,333.1 115.8,330.9" fill="#f0d040" stroke="#555" stroke-width="0.6" stroke-linejoin="round"/><polygon points="115.8,330.9 120.3,333.1 120.3,337.6 115.8,335.4" fill="#40b050" stroke="#555" stroke-width="0.6" stroke-linejoin="round"/><polygon points="120.3,333.1 124.8,330.9 124.8,335.4 120.3,337.6" fill="#e05030" stroke="#555" stroke-width="0.6" stroke-linejoin="round"/><rect x="118.3" y="332.1" width="3" height="3" fill="#3a70e0"/><path d="M147.5,347.7 v-4 q0,-0.8 0.8,-0.8 h6 l1,1.4 h4.6 q0.8,0 0.8,0.8 v2.6 z" fill="#d2a022" stroke="#9a7a20" stroke-width="0.6"/><path d="M146.0,347.7 h15.6 l-1,11.6 h-13.6 z" fill="#f7eca4" stroke="#5a5a5a" stroke-width="1.3" stroke-linejoin="round"/><path d="M147.0,348.9 h13.6" stroke="#fbf6cf" stroke-width="1"/><text x="150.9" y="357.3" font-family="Liberation Mono, monospace" font-weight="700" font-size="10" fill="#3a78e0">i</text><path d="M15.7,601.9 V804 M431.4,601.9 V804 M15.7,601.9 H431.4 M15.7,624.3 H431.4 M15.7,646.7 H431.4 M15.7,669.2 H431.4 M15.7,691.6 H431.4 M15.7,714.0 H431.4 M15.7,736.4 H431.4 M15.7,758.8 H431.4 M15.7,781.3 H431.4 M15.7,803.7 H431.4 M190.6,624.3 V646.7 M190.6,669.2 V691.6 M190.6,691.6 V714.0 M190.6,714.0 V736.4 M190.6,781.3 V803.7 " stroke="#a2a2a2" stroke-width="1.2" fill="none"/><rect x="2" y="607.8" width="10" height="10" fill="#fff" stroke="#8a8a8a"/><path d="M4.5,612.8 h5" stroke="#000" stroke-width="1.2"/><rect x="2" y="652.8" width="10" height="10" fill="#fff" stroke="#8a8a8a"/><path d="M4.5,657.8 h5" stroke="#000" stroke-width="1.2"/><rect x="2" y="742.6" width="10" height="10" fill="#fff" stroke="#8a8a8a"/><path d="M4.5,747.6 h5" stroke="#000" stroke-width="1.2"/><path d="M7,745.1 v5" stroke="#000" stroke-width="1.2"/><rect x="2" y="765.0" width="10" height="10" fill="#fff" stroke="#8a8a8a"/><path d="M4.5,770.0 h5" stroke="#000" stroke-width="1.2"/><path d="M437.6,615 l4.6,-4.6 l4.6,4.6" fill="none" stroke="#505050" stroke-width="1.9"/><circle cx="498.0" cy="17.2" r="6.3" fill="#f6f6f8" stroke="#3a3a3a" stroke-width="1.9"/><path d="M502.7,22.1 l4.6,4.8" stroke="#3a3a3a" stroke-width="2.3" stroke-linecap="round"/><polygon points="493.8,17.2 497.6,13.8 497.6,15.9 501.6,15.9 501.6,18.5 497.6,18.5 497.6,20.6" fill="#d9a414"/><circle cx="525.5" cy="17.2" r="6.3" fill="#f6f6f8" stroke="#a2a2a6" stroke-width="1.9"/><path d="M530.2,22.1 l4.6,4.8" stroke="#a2a2a6" stroke-width="2.3" stroke-linecap="round"/><polygon points="529.7,17.2 525.9,13.8 525.9,15.9 521.9,15.9 521.9,18.5 525.9,18.5 525.9,20.6" fill="#c4c4c8"/><path d="M543.4,7.5 V32" stroke="#c4c4d6" stroke-width="1.2"/><rect x="548.5" y="5.5" width="26" height="27" fill="#eeeef4" stroke="#3b97f5" stroke-width="1.2"/><polygon points="561.5,10.2 569.0,13.9 561.5,17.7 554.0,13.9" fill="#c9c9c9" stroke="#333" stroke-width="1.3" stroke-linejoin="round"/><polygon points="554.0,13.9 561.5,17.7 561.5,25.2 554.0,21.4" fill="#6a6a6a" stroke="#333" stroke-width="1.3" stroke-linejoin="round"/><polygon points="561.5,17.7 569.0,13.9 569.0,21.4 561.5,25.2" fill="#9b9b9b" stroke="#333" stroke-width="1.3" stroke-linejoin="round"/><polygon points="588.8,10.6 596.3,14.3 588.8,18.1 581.3,14.3" fill="#cfcfcf" stroke="#b0b0b0" stroke-width="0.4" stroke-linejoin="round"/><polygon points="581.3,14.3 588.8,18.1 588.8,25.6 581.3,21.9" fill="#8a8a8a" stroke="#b0b0b0" stroke-width="0.4" stroke-linejoin="round"/><polygon points="588.8,18.1 596.3,14.3 596.3,21.9 588.8,25.6" fill="#a6a6a6" stroke="#b0b0b0" stroke-width="0.4" stroke-linejoin="round"/><polygon points="619.0,12.2 621.4,10.0 626.9,10.0 624.5,12.2" fill="#fff" stroke="#333" stroke-width="1" stroke-linejoin="round"/><polygon points="624.5,12.2 626.9,10.0 626.9,14.0 624.5,16.2" fill="#eee" stroke="#333" stroke-width="1" stroke-linejoin="round"/><polygon points="619.0,12.2 624.5,12.2 624.5,16.2 619.0,16.2" fill="#fff" stroke="#333" stroke-width="1" stroke-linejoin="round"/><polygon points="608.5,20.4 611.1,18.0 617.1,18.0 614.5,20.4" fill="#e8b820" stroke="#333" stroke-width="1" stroke-linejoin="round"/><polygon points="614.5,20.4 617.1,18.0 617.1,22.6 614.5,25.0" fill="#b88a10" stroke="#333" stroke-width="1" stroke-linejoin="round"/><polygon points="608.5,20.4 614.5,20.4 614.5,25.0 608.5,25.0" fill="#d9a414" stroke="#333" stroke-width="1" stroke-linejoin="round"/><path d="M610,14 q1,-3 4,-4 M622.5,22 q-1,3 -4,4" fill="none" stroke="#444" stroke-width="1.1" stroke-dasharray="2 1.4"/><path d="M633.4,7.5 V32" stroke="#c4c4d6" stroke-width="1.2"/><rect x="643.4" y="10.4" width="6.4" height="6.2" fill="none" stroke="#9a9a9a" stroke-width="1.1"/><rect x="652.3" y="19.4" width="7" height="7.2" fill="none" stroke="#9a9a9a" stroke-width="1.1"/><path d="M655.8,19.4 v7.2 M652.3,23 h7 M652.5,12 l4.5,5" stroke="#b4b4b4" stroke-width="1"/><rect x="670.9" y="10.5" width="6.2" height="6" fill="none" stroke="#333" stroke-width="1.4"/><rect x="679.9" y="19.6" width="7.4" height="7" fill="none" stroke="#333" stroke-width="1.4"/><path d="M679,11 l5,5.4" stroke="#d9a414" stroke-width="1.5"/><polygon points="685.6,18.2 681.4,17.2 685,13.6" fill="#d9a414"/><path d="M696.0,7.5 V32" stroke="#c4c4d6" stroke-width="1.2"/><path d="M707.4,15.4 a7,7 0 0 1 13.4,0.4 M720.6,20.8 a7,7 0 0 1 -13.4,-0.4" fill="none" stroke="#3a3a3a" stroke-width="1.5"/><polygon points="705.8,13.4 709.6,17.4 704.8,17.8" fill="#d9a414"/><polygon points="722.4,22.8 718.4,18.8 723.2,18.4" fill="#d9a414"/><polygon points="731.0,16.2 738.4,16.2 734.7,20.2" fill="#6e6e7e"/><path d="M755.2,13.0 v11 M749.7,18.5 h11" stroke="#222" stroke-width="1.6" stroke-dasharray="2 1.6"/><polygon points="755.2,9.9 751.6,13.9 758.8,13.9" fill="#d9a414"/><polygon points="755.2,27.1 751.6,23.1 758.8,23.1" fill="#d9a414"/><polygon points="746.6,18.5 750.6,14.9 750.6,22.1" fill="#d9a414"/><polygon points="763.8,18.5 759.8,14.9 759.8,22.1" fill="#d9a414"/><circle cx="782.1" cy="17.2" r="6.3" fill="#f6f6f8" stroke="#3a3a3a" stroke-width="1.9"/><path d="M786.8,22.1 l4.6,4.8" stroke="#3a3a3a" stroke-width="2.3" stroke-linecap="round"/><polygon points="782.1,12.8 779.1,16.3 785.1,16.3" fill="#d9a414"/><polygon points="782.1,21.6 779.1,18.1 785.1,18.1" fill="#d9a414"/><circle cx="808.6" cy="17.2" r="6.3" fill="#f6f6f8" stroke="#3a3a3a" stroke-width="1.9"/><path d="M813.3,22.1 l4.6,4.8" stroke="#3a3a3a" stroke-width="2.3" stroke-linecap="round"/><path d="M804.6,17.2 h8 M808.6,13.2 v8" stroke="#d9a414" stroke-width="2.6"/><circle cx="836.6" cy="17.2" r="6.3" fill="#f6f6f8" stroke="#3a3a3a" stroke-width="1.9"/><path d="M841.3,22.1 l4.6,4.8" stroke="#3a3a3a" stroke-width="2.3" stroke-linecap="round"/><polygon points="836.6,13.0 840.6,15.0 836.6,17.0 832.6,15.0" fill="#dfeaf8" stroke="#666" stroke-width="0.5" stroke-linejoin="round"/><polygon points="832.6,15.0 836.6,17.0 836.6,21.0 832.6,19.0" fill="#4f8fe0" stroke="#666" stroke-width="0.5" stroke-linejoin="round"/><polygon points="836.6,17.0 840.6,15.0 840.6,19.0 836.6,21.0" fill="#8ab6ee" stroke="#666" stroke-width="0.5" stroke-linejoin="round"/><circle cx="864.1" cy="17.2" r="6.3" fill="#f6f6f8" stroke="#3a3a3a" stroke-width="1.9"/><path d="M868.8,22.1 l4.6,4.8" stroke="#3a3a3a" stroke-width="2.3" stroke-linecap="round"/><polygon points="864.1,13.0 868.1,15.0 864.1,17.0 860.1,15.0" fill="#e8f4e8" stroke="#666" stroke-width="0.5" stroke-linejoin="round"/><polygon points="860.1,15.0 864.1,17.0 864.1,21.0 860.1,19.0" fill="#18c018" stroke="#666" stroke-width="0.5" stroke-linejoin="round"/><polygon points="864.1,17.0 868.1,15.0 868.1,19.0 864.1,21.0" fill="#7ab0e8" stroke="#666" stroke-width="0.5" stroke-linejoin="round"/><circle cx="892.1" cy="17.2" r="6.3" fill="#f6f6f8" stroke="#3a3a3a" stroke-width="1.9"/><path d="M896.8,22.1 l4.6,4.8" stroke="#3a3a3a" stroke-width="2.3" stroke-linecap="round"/><polygon points="892.1,12.8 889.1,16.3 895.1,16.3" fill="#d9a414"/><polygon points="892.1,21.6 889.1,18.1 895.1,18.1" fill="#d9a414"/><path d="M909.5,7.5 V32" stroke="#c4c4d6" stroke-width="1.2"/><rect x="967.7" y="9.9" width="7.6" height="7.2" fill="#f00"/><polygon points="973.6,13.4 982.8,17.8 979.4,19.2 983.2,24.8 981,26 977.4,20.6 974.8,23.4" fill="#3c3c3c"/><polygon points="1030.1,16.2 1037.5,16.2 1033.8,20.2" fill="#8a8a96"/><path d="M1052.0,17.9 v-7.5 h7.5" fill="none" stroke="#333" stroke-width="1.2"/><polygon points="1053.0,11.4 1059.5,12.0 1055.0,16.4" fill="#00d800"/><path d="M1062.0,17.9 v-7.5 h7.5" fill="none" stroke="#333" stroke-width="1.2"/><polygon points="1063.0,11.4 1069.5,12.0 1065.0,16.4" fill="#00d800"/><path d="M1052.0,27.9 v-7.5 h7.5" fill="none" stroke="#333" stroke-width="1.2"/><polygon points="1053.0,21.4 1059.5,22.0 1055.0,26.4" fill="#00d800"/><rect x="1063" y="10.2" width="7.4" height="3.6" fill="#00e000"/><polygon points="1064.4,20.6 1069.4,23 1067.6,23.8 1069,26.6 1067.8,27 1066.4,24.4 1065,25.6" fill="#777"/><rect x="1103.5" y="5.5" width="26.5" height="27" fill="#eeeef4" stroke="#3b97f5" stroke-width="1.2"/><polygon points="1084.8,14.3 1080.3,10.0 1092.1,10.0 1097.8,14.3" fill="#f4f4f6" stroke="#333" stroke-width="1.1" stroke-linejoin="round"/><polygon points="1084.8,14.3 1080.3,10.0 1080.3,20.9 1084.8,26.7" fill="#f4f4f6" stroke="#333" stroke-width="1.1" stroke-linejoin="round"/><rect x="1084.8" y="14.3" width="13.0" height="12.4" fill="#f4f4f6" stroke="#333" stroke-width="1.1"/><circle cx="1084.8" cy="14.3" r="1.9" fill="#00d000"/><polygon points="1090.0,18.6 1094.6,20.9 1093.0,21.6 1094.6,24.6 1093.6,25.1 1092.0,22.2 1091.0,23.4" fill="#444"/><polygon points="1112.5,14.3 1108.0,10.0 1119.8,10.0 1125.5,14.3" fill="#f4f4f6" stroke="#333" stroke-width="1.1" stroke-linejoin="round"/><polygon points="1112.5,14.3 1108.0,10.0 1108.0,20.9 1112.5,26.7" fill="#f4f4f6" stroke="#333" stroke-width="1.1" stroke-linejoin="round"/><rect x="1112.5" y="14.3" width="13.0" height="12.4" fill="#f4f4f6" stroke="#333" stroke-width="1.1"/><path d="M1108.6,10.8 L1112.5,14.3" stroke="#00e000" stroke-width="2.4"/><polygon points="1117.7,18.6 1122.3,20.9 1120.7,21.6 1122.3,24.6 1121.3,25.1 1119.7,22.2 1118.7,23.4" fill="#444"/><polygon points="1139.7,14.3 1135.2,10.0 1147.0,10.0 1152.7,14.3" fill="#00e000" stroke="#333" stroke-width="1.1" stroke-linejoin="round"/><polygon points="1139.7,14.3 1135.2,10.0 1135.2,20.9 1139.7,26.7" fill="#f4f4f6" stroke="#333" stroke-width="1.1" stroke-linejoin="round"/><rect x="1139.7" y="14.3" width="13.0" height="12.4" fill="#f4f4f6" stroke="#333" stroke-width="1.1"/><polygon points="1144.9,18.6 1149.5,20.9 1147.9,21.6 1149.5,24.6 1148.5,25.1 1146.9,22.2 1145.9,23.4" fill="#444"/><polygon points="1167.5,14.3 1163.0,10.0 1174.8,10.0 1180.5,14.3" fill="#00e000" stroke="#333" stroke-width="1.1" stroke-linejoin="round"/><polygon points="1167.5,14.3 1163.0,10.0 1163.0,20.9 1167.5,26.7" fill="#00e000" stroke="#333" stroke-width="1.1" stroke-linejoin="round"/><rect x="1167.5" y="14.3" width="13.0" height="12.4" fill="#00e000" stroke="#333" stroke-width="1.1"/><polygon points="1172.7,18.6 1177.3,20.9 1175.7,21.6 1177.3,24.6 1176.3,25.1 1174.7,22.2 1173.7,23.4" fill="#1a5a1a"/><polygon points="1194.5,14.3 1190.0,10.0 1201.8,10.0 1207.5,14.3" fill="#f4f4f6" stroke="#333" stroke-width="1.1" stroke-linejoin="round"/><polygon points="1194.5,14.3 1190.0,10.0 1190.0,20.9 1194.5,26.7" fill="#f4f4f6" stroke="#333" stroke-width="1.1" stroke-linejoin="round"/><rect x="1194.5" y="14.3" width="13.0" height="12.4" fill="#f4f4f6" stroke="#333" stroke-width="1.1"/><path d="M1198.8,14.3 v12.4 M1194.5,18.4 h13.0" stroke="#4a90f0" stroke-width="1"/><path d="M1198.8,14.3 l-4.5,-4.3" stroke="#4a90f0" stroke-width="1"/><path d="M1194.5,18.4 l-4.5,-4.3" stroke="#4a90f0" stroke-width="1"/><path d="M1203.2,14.3 v12.4 M1194.5,22.6 h13.0" stroke="#4a90f0" stroke-width="1"/><path d="M1203.2,14.3 l-4.5,-4.3" stroke="#4a90f0" stroke-width="1"/><path d="M1194.5,22.6 l-4.5,-4.3" stroke="#4a90f0" stroke-width="1"/><rect x="1194.5" y="14.3" width="13.0" height="12.4" fill="none" stroke="#333" stroke-width="1.1"/><circle cx="1195.0" cy="14.3" r="1.9" fill="#00a020"/><polygon points="1199.7,18.6 1204.3,20.9 1202.7,21.6 1204.3,24.6 1203.3,25.1 1201.7,22.2 1200.7,23.4" fill="#444"/><polygon points="1222.5,14.3 1218.0,10.0 1229.8,10.0 1235.5,14.3" fill="#f4f4f6" stroke="#333" stroke-width="1.1" stroke-linejoin="round"/><polygon points="1222.5,14.3 1218.0,10.0 1218.0,20.9 1222.5,26.7" fill="#f4f4f6" stroke="#333" stroke-width="1.1" stroke-linejoin="round"/><rect x="1222.5" y="14.3" width="13.0" height="12.4" fill="#f4f4f6" stroke="#333" stroke-width="1.1"/><path d="M1226.8,14.3 v12.4 M1222.5,18.4 h13.0" stroke="#4a90f0" stroke-width="1"/><path d="M1226.8,14.3 l-4.5,-4.3" stroke="#4a90f0" stroke-width="1"/><path d="M1222.5,18.4 l-4.5,-4.3" stroke="#4a90f0" stroke-width="1"/><path d="M1231.2,14.3 v12.4 M1222.5,22.6 h13.0" stroke="#4a90f0" stroke-width="1"/><path d="M1231.2,14.3 l-4.5,-4.3" stroke="#4a90f0" stroke-width="1"/><path d="M1222.5,22.6 l-4.5,-4.3" stroke="#4a90f0" stroke-width="1"/><rect x="1222.5" y="14.3" width="13.0" height="12.4" fill="none" stroke="#333" stroke-width="1.1"/><polygon points="1222.0,12.7 1219.6,11.3 1228.0,11.3 1233.0,12.7" fill="none" stroke="#00c000" stroke-width="1.8" stroke-dasharray="2.2 1.6"/><polygon points="1227.7,18.6 1232.3,20.9 1230.7,21.6 1232.3,24.6 1231.3,25.1 1229.7,22.2 1228.7,23.4" fill="#444"/><polygon points="1249.9,14.3 1245.4,10.0 1257.2,10.0 1262.9,14.3" fill="#f4f4f6" stroke="#333" stroke-width="1.1" stroke-linejoin="round"/><polygon points="1249.9,14.3 1245.4,10.0 1245.4,20.9 1249.9,26.7" fill="#f4f4f6" stroke="#333" stroke-width="1.1" stroke-linejoin="round"/><rect x="1249.9" y="14.3" width="13.0" height="12.4" fill="#f4f4f6" stroke="#333" stroke-width="1.1"/><path d="M1254.2,14.3 v12.4 M1249.9,18.4 h13.0" stroke="#4a90f0" stroke-width="1"/><path d="M1254.2,14.3 l-4.5,-4.3" stroke="#4a90f0" stroke-width="1"/><path d="M1249.9,18.4 l-4.5,-4.3" stroke="#4a90f0" stroke-width="1"/><path d="M1258.6,14.3 v12.4 M1249.9,22.6 h13.0" stroke="#4a90f0" stroke-width="1"/><path d="M1258.6,14.3 l-4.5,-4.3" stroke="#4a90f0" stroke-width="1"/><path d="M1249.9,22.6 l-4.5,-4.3" stroke="#4a90f0" stroke-width="1"/><rect x="1249.9" y="14.3" width="13.0" height="12.4" fill="none" stroke="#333" stroke-width="1.1"/><rect x="1250.4" y="15.1" width="6" height="6" fill="none" stroke="#00c000" stroke-width="1.8" stroke-dasharray="2 1.4"/><polygon points="1255.1,18.6 1259.7,20.9 1258.1,21.6 1259.7,24.6 1258.7,25.1 1257.1,22.2 1256.1,23.4" fill="#444"/><text x="1271" y="16.6" font-family="Liberation Sans, sans-serif" font-size="7.4" font-weight="700" fill="#a8a8a8" textLength="19" lengthAdjust="spacingAndGlyphs">X,Y,Z</text><polygon points="1278.4,17.2 1284.0,19.6 1282.0,20.5 1284.4,25.4 1282.8,26.2 1280.4,21.4 1279.0,23.0" fill="#d9a414" stroke="#a07a0c" stroke-width="0.4"/><path d="M1300.6,10.6 h13 l3.6,3.8 l-3.6,3.8 h-13 z" fill="#fff" stroke="#333" stroke-width="1.3"/><path d="M1303.6,12.6 v3.6" stroke="#333" stroke-width="1.2"/><circle cx="1307.4" cy="14.4" r="1.5" fill="none" stroke="#333" stroke-width="1"/><circle cx="1311.6" cy="14.4" r="1.5" fill="none" stroke="#333" stroke-width="1"/><polygon points="1306.4,17.6 1312.0,20.0 1310.0,20.9 1312.4,25.8 1310.8,26.6 1308.4,21.8 1307.0,23.4" fill="#d9a414" stroke="#a07a0c" stroke-width="0.4"/><path d="M1328.6,11 h12 l4.6,6.4 l-4.6,6.6 h-12 z" fill="#e2e2e4" stroke="#b4b4b8" stroke-width="1.2"/><text x="1329.6" y="20.6" font-family="Liberation Sans, sans-serif" font-size="7.5" fill="#9a9aa0">Abc</text><path d="M1341,24 l3,2.6" stroke="#b4b4b8" stroke-width="1.6"/><path d="M1353.4,7.5 V32" stroke="#c4c4d6" stroke-width="1.2"/><path d="M1363.4,18.6 l4.4,-3.6 l3.4,2.4 l6.6,-5.6 M1375,11.4 h3 v3" fill="none" stroke="#c6c6ca" stroke-width="1"/><path d="M1363.4,23 h16" stroke="#c6c6ca" stroke-width="1"/><circle cx="1364.4" cy="23" r="1.3" fill="#eeeef2" stroke="#c6c6ca" stroke-width="0.8"/><circle cx="1371.4" cy="23" r="1.3" fill="#eeeef2" stroke="#c6c6ca" stroke-width="0.8"/><circle cx="1378.4" cy="23" r="1.3" fill="#eeeef2" stroke="#c6c6ca" stroke-width="0.8"/><path d="M1388.4,7.5 V32" stroke="#c4c4d6" stroke-width="1.2"/><rect x="1398.3" y="10.5" width="16.4" height="16" fill="#e9c143" stroke="#3a3a3a" stroke-width="1.2"/><path d="M1401.6,13.8 h9.8 M1404.4,13.2 l2.1,-1.6 l2.1,1.6" stroke="#3a3a3a" stroke-width="1.1" fill="none"/><polygon points="1486.1,15.8 1493.5,15.8 1489.8,19.8" fill="#8a8a96"/><path d="M1577.0,7.5 V32" stroke="#c4c4d6" stroke-width="1.2"/><polygon points="1587,17.6 1595,14.2 1603.6,17 1603.6,23.8 1595.6,27 1587,24.2" fill="#fff" stroke="#333" stroke-width="1.2" stroke-linejoin="round"/><polygon points="1587,17.6 1595.4,20.2 1595.6,27 1587,24.2" fill="#10d020" stroke="#333" stroke-width="1"/><path d="M1595.4,20.2 L1603.6,17" stroke="#333" stroke-width="1"/><path d="M1590.6,13.4 q5,-4.4 10.6,-0.6" fill="none" stroke="#333" stroke-width="1"/><path d="M1595.4,12.2 v4 M1593.4,14.2 h4" stroke="#d9a414" stroke-width="1.4"/><path d="M492.9,771.6 l2.9,3.3 l5.2,-6.6" fill="none" stroke="#62626a" stroke-width="1.6"/><path d="M630.1,771.6 l2.9,3.3 l5.2,-6.6" fill="none" stroke="#62626a" stroke-width="1.6"/><path d="M793.6,771.6 l2.9,3.3 l5.2,-6.6" fill="none" stroke="#62626a" stroke-width="1.6"/><path d="M920.0,771.6 l2.9,3.3 l5.2,-6.6" fill="none" stroke="#62626a" stroke-width="1.6"/><path d="M1062.4,771.6 l2.9,3.3 l5.2,-6.6" fill="none" stroke="#62626a" stroke-width="1.6"/><polygon points="1205.6,777.2 1215,777.2 1210.3,781.6" fill="#1a1a1a"/><path d="M519.7,789 V804 M1101,789 V804 M1482,789 V804" stroke="#3a3a3a" stroke-width="1.2"/><rect x="969" y="670" width="438.5" height="11.6" fill="#fff" stroke="#555" stroke-width="1.1"/><rect x="969" y="669.6" width="109.8" height="12.4" fill="#000"/><rect x="1188" y="669.6" width="109.6" height="12.4" fill="#000"/></svg>
<span class="t" style="left:4.8px;top:7.2px;font-size:15px;font-weight:400;color:#4a4a58;transform:scaleX(1.0477)">Outline</span>
<span class="t" style="left:30.0px;top:36.2px;font-size:15px;font-weight:400;color:#1e1e2a;transform:scaleX(1.0196)">Name</span>
<span class="t" style="left:155.9px;top:36.2px;font-size:15px;font-weight:400;color:#a6a6ae;transform:scaleX(0.9805)">Search Outline</span>
<span class="t" style="left:34.5px;top:64.2px;font-size:14px;font-weight:700;color:#000;transform:scaleX(1.1356)">Project*</span>
<span class="t" style="left:68.5px;top:84.2px;font-size:14px;font-weight:700;color:#000;transform:scaleX(1.0760)">Model (B4)</span>
<span class="t" style="left:102.2px;top:104.2px;font-size:14px;font-weight:400;color:#000;transform:scaleX(0.9703)">Geometry Imports</span>
<span class="t" style="left:102.2px;top:124.2px;font-size:14px;font-weight:400;color:#000;transform:scaleX(0.9468)">Geometry</span>
<span class="t" style="left:102.2px;top:144.2px;font-size:14px;font-weight:400;color:#000;transform:scaleX(0.9402)">Materials</span>
<span class="t" style="left:102.2px;top:164.2px;font-size:14px;font-weight:400;color:#000;transform:scaleX(0.9511)">Coordinate Systems</span>
<span class="t" style="left:102.3px;top:184.2px;font-size:14px;font-weight:400;color:#000;transform:scaleX(0.9055)">Mesh</span>
<span class="t" style="left:135.6px;top:204.2px;font-size:14px;font-weight:400;color:#000;transform:scaleX(0.9156)">Body Sizing</span>
<span class="t" style="left:135.6px;top:224.2px;font-size:14px;font-weight:400;color:#000;transform:scaleX(0.9257)">Face Meshing</span>
<span class="t" style="left:135.6px;top:244.2px;font-size:14px;font-weight:400;color:#000;transform:scaleX(0.9354)">MultiZone</span>
<span class="t" style="left:135.6px;top:264.2px;font-size:14px;font-weight:400;color:#000;transform:scaleX(0.9061)">Edge Sizing</span>
<span class="t" style="left:101.8px;top:284.2px;font-size:14px;font-weight:700;color:#000;transform:scaleX(1.0873)">Static Structural (B5)</span>
<span class="t" style="left:136.4px;top:304.2px;font-size:14px;font-weight:400;color:#000;transform:scaleX(0.9464)">Analysis Settings</span>
<span class="t" style="left:136.0px;top:324.2px;font-size:14px;font-weight:700;color:#000;transform:scaleX(1.0550)">Solution (B6)</span>
<span class="t" style="left:169.7px;top:344.2px;font-size:14px;font-weight:400;color:#000;transform:scaleX(0.9741)">Solution Information</span>
<span class="t" style="left:4.8px;top:580.2px;font-size:15px;font-weight:400;color:#4a4a58;transform:scaleX(0.9971)">Details of "Mesh"</span>
<span class="t" style="left:20.0px;top:606.0px;font-size:13.4px;font-weight:700;color:#000;transform:scaleX(1.0096)">Display</span>
<span class="t" style="left:20.0px;top:628.0px;font-size:13.4px;font-weight:400;color:#000;transform:scaleX(1.0322)">Display Style</span>
<span class="t" style="left:194.9px;top:628.0px;font-size:13.4px;font-weight:400;color:#000;transform:scaleX(1.0582)">Use Geometry Setting</span>
<span class="t" style="left:20.0px;top:651.0px;font-size:13.4px;font-weight:700;color:#000;transform:scaleX(1.0313)">Defaults</span>
<span class="t" style="left:20.0px;top:673.0px;font-size:13.4px;font-weight:400;color:#000;transform:scaleX(1.0090)">Physics Preference</span>
<span class="t" style="left:194.9px;top:673.0px;font-size:13.4px;font-weight:400;color:#000;transform:scaleX(1.0822)">Mechanical</span>
<span class="t" style="left:20.0px;top:696.0px;font-size:13.4px;font-weight:400;color:#000;transform:scaleX(1.0737)">Element Order</span>
<span class="t" style="left:194.9px;top:696.0px;font-size:13.4px;font-weight:400;color:#000;transform:scaleX(1.0912)">Program Controlled</span>
<span class="t" style="left:40.1px;top:718.0px;font-size:13.4px;font-weight:400;color:#000;transform:scaleX(1.0177)">Element Size</span>
<span class="t" style="left:194.9px;top:718.0px;font-size:13.4px;font-weight:400;color:#000;transform:scaleX(1.1264)">Default</span>
<span class="t" style="left:20.0px;top:741.0px;font-size:13.4px;font-weight:700;color:#000;transform:scaleX(0.9864)">Sizing</span>
<span class="t" style="left:20.0px;top:763.0px;font-size:13.4px;font-weight:700;color:#000;transform:scaleX(1.0288)">Quality</span>
<span class="t" style="left:20.0px;top:786.0px;font-size:13.4px;font-weight:400;color:#000;transform:scaleX(1.0582)">Check Mesh Quality</span>
<span class="t" style="left:194.9px;top:786.0px;font-size:13.4px;font-weight:400;color:#000;transform:scaleX(0.9764)">Yes, Errors</span>
<span class="t" style="left:918.1px;top:10.2px;font-size:15px;font-weight:400;color:#1e1e2a;transform:scaleX(0.9616)">Select</span>
<span class="t" style="left:988.7px;top:10.2px;font-size:15px;font-weight:400;color:#1e1e2a;transform:scaleX(1.0631)">Mode</span>
<span class="t" style="left:1418.7px;top:10.2px;font-size:15px;font-weight:400;color:#1e1e2a;transform:scaleX(1.0106)">Clipboard</span>
<span class="t" style="left:1508.7px;top:10.2px;font-size:15px;font-weight:400;color:#1e1e2a;transform:scaleX(1.0171)">[ Empty ]</span>
<span class="t" style="left:955.1px;top:653.0px;font-size:13.4px;font-weight:400;color:#000;transform:scaleX(1.0475)">0.00</span>
<span class="t" style="left:1170.0px;top:653.0px;font-size:13.4px;font-weight:400;color:#000;transform:scaleX(1.0473)">25.00</span>
<span class="t" style="left:1389.9px;top:653.0px;font-size:13.4px;font-weight:400;color:#000;transform:scaleX(1.0324)">50.00</span>
<span class="t" style="left:1426.5px;top:653.0px;font-size:13.4px;font-weight:400;color:#000;transform:scaleX(1.1910)">(mm)</span>
<span class="t" style="left:1061.1px;top:689.0px;font-size:13.4px;font-weight:400;color:#000;transform:scaleX(1.0055)">12.50</span>
<span class="t" style="left:1280.1px;top:689.0px;font-size:13.4px;font-weight:400;color:#000;transform:scaleX(1.0324)">37.50</span>
<span class="t" style="left:463.8px;top:735.2px;font-size:15px;font-weight:400;color:#4a4a58;transform:scaleX(0.9404)">Messages</span>
<span class="t" style="left:512.0px;top:764.2px;font-size:15px;font-weight:400;color:#1e1e2a;transform:scaleX(0.9475)">Show Errors</span>
<span class="t" style="left:600.1px;top:764.2px;font-size:15px;font-weight:400;color:#1e1e2a;transform:scaleX(0.9431)">(0)</span>
<span class="t" style="left:649.8px;top:764.2px;font-size:15px;font-weight:400;color:#1e1e2a;transform:scaleX(0.9914)">Show Warnings</span>
<span class="t" style="left:762.1px;top:764.2px;font-size:15px;font-weight:400;color:#1e1e2a;transform:scaleX(1.0085)">(0)</span>
<span class="t" style="left:812.1px;top:764.2px;font-size:15px;font-weight:400;color:#1e1e2a;transform:scaleX(0.9967)">Show Info</span>
<span class="t" style="left:888.4px;top:764.2px;font-size:15px;font-weight:400;color:#1e1e2a;transform:scaleX(1.0085)">(0)</span>
<span class="t" style="left:938.6px;top:764.2px;font-size:15px;font-weight:400;color:#1e1e2a;transform:scaleX(0.9621)">Merge Messages</span>
<span class="t" style="left:1081.0px;top:764.2px;font-size:15px;font-weight:400;color:#1e1e2a;transform:scaleX(0.9793)">Pop-up Messages</span>
<span class="t" style="left:523.4px;top:792.0px;font-size:13.4px;font-weight:400;color:#000;transform:scaleX(1.0667)">Text</span>
<span class="t" style="left:1104.8px;top:792.0px;font-size:13.4px;font-weight:400;color:#000;transform:scaleX(1.0849)">Association</span>
<span class="t" style="left:1485.3px;top:792.0px;font-size:13.4px;font-weight:400;color:#000;transform:scaleX(1.0542)">Timestamp</span>
</body></html>
